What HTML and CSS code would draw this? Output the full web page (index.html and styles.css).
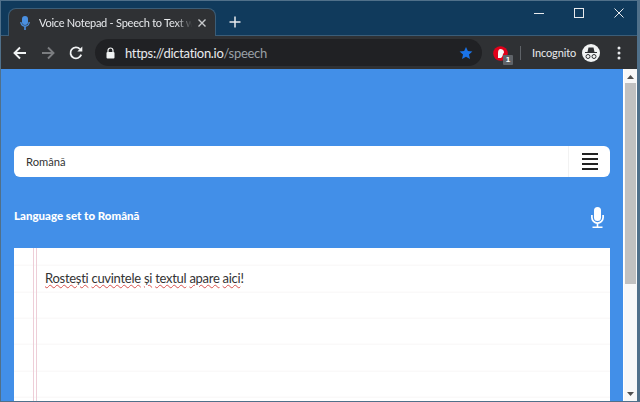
FILE: index.html
```html
<!DOCTYPE html>
<html lang="ro">
<head>
<meta charset="utf-8">
<title>Voice Notepad</title>
<link rel="stylesheet" href="styles.css">
</head>
<body>
<div class="window">
  <header class="tabstrip">
    <div class="tab">
      <svg class="tab-icon" width="10" height="14" viewBox="0 0 10 14"><rect x="2" y="0" width="6" height="9" rx="3" fill="#4a90e2"/><path d="M.8 6a4.200 4.200 0 0 0 8.400 0" fill="none" stroke="#4a90e2" stroke-width="1.300"/><rect x="4.200" y="10" width="1.600" height="4" fill="#4a90e2"/></svg>
      <span class="tab-title">Voice Notepad - Speech to Text w</span>
      <svg class="tab-close" width="10" height="10" viewBox="0 0 10 10"><path d="M1.500 1.500l7 7M8.500 1.500l-7 7" stroke="#c8cacc" stroke-width="1.400"/></svg>
    </div>
    <svg class="new-tab" width="12" height="12" viewBox="0 0 12 12"><path d="M6 .5v11M.5 6h11" stroke="#e8eaed" stroke-width="1.500"/></svg>
    <div class="win-controls">
      <svg width="10" height="10" viewBox="0 0 10 10"><path d="M0 5.500h10" stroke="#e8eaed"/></svg>
      <svg width="10" height="10" viewBox="0 0 10 10"><rect x=".5" y=".5" width="9" height="9" fill="none" stroke="#e8eaed"/></svg>
      <svg width="10" height="10" viewBox="0 0 10 10"><path d="M.5.5l9 9M9.500.5l-9 9" stroke="#e8eaed"/></svg>
    </div>
  </header>
  <nav class="toolbar">
    <svg class="nav-icon" width="16" height="16" viewBox="0 0 16 16"><path d="M14 8H3M8 2.500L2.500 8 8 13.500" fill="none" stroke="#f1f3f4" stroke-width="1.900"/></svg>
    <svg class="nav-icon" width="16" height="16" viewBox="0 0 16 16"><path d="M2 8h11M8 2.500L13.500 8 8 13.500" fill="none" stroke="#7b7d80" stroke-width="1.900"/></svg>
    <svg class="nav-icon" width="16" height="16" viewBox="0 0 16 16"><path d="M13.200 9.600A5.500 5.500 0 1 1 12 4.100" fill="none" stroke="#f1f3f4" stroke-width="1.800"/><path d="M9.300 6.600h5V1.600z" fill="#f1f3f4"/></svg>
    <div class="omnibox">
      <svg class="lock" width="9" height="12" viewBox="0 0 9 12"><path d="M2 5V3.500a2.500 2.500 0 0 1 5 0V5" fill="none" stroke="#f1f3f4" stroke-width="1.200"/><rect x=".5" y="5" width="8" height="6.500" rx="1" fill="#f1f3f4"/></svg>
      <span class="url"><span class="url-host">https://dictation.io</span><span class="url-path">/speech</span></span>
      <svg class="star" width="14" height="14" viewBox="0 0 24 24"><path d="M12 1.500l3.200 7.200 7.800.8-5.900 5.200 1.700 7.700L12 18.400 5.200 22.400l1.700-7.700L1 9.500l7.800-.8z" fill="#1a73e8"/></svg>
    </div>
    <div class="ext">
      <svg class="ext-icon" width="15" height="15" viewBox="0 0 15 15"><circle cx="7.500" cy="7.500" r="7.300" fill="#e2001a"/><path d="M5 12V7c0-2.500 1-4 2.500-4S11 4 11 6c0 1-.5 1.500-1 2-.3 2.500-1.500 4-2.500 4z" fill="#f6f6f6"/></svg>
      <span class="ext-badge">1</span>
    </div>
    <span class="divider"></span>
    <span class="incognito-label">Incognito</span>
    <svg class="incognito-icon" width="18" height="18" viewBox="0 0 18 18"><circle cx="9" cy="9" r="9" fill="#f1f3f4"/><path d="M3 8h12v1H3zM5.500 8l1-4.500h5l1 4.500z" fill="#2f3134"/><circle cx="6" cy="12.500" r="2" fill="none" stroke="#2f3134" stroke-width="1"/><circle cx="12" cy="12.500" r="2" fill="none" stroke="#2f3134" stroke-width="1"/></svg>
    <svg class="kebab" width="4" height="14" viewBox="0 0 4 14"><circle cx="2" cy="2" r="1.500" fill="#e8eaed"/><circle cx="2" cy="7" r="1.500" fill="#e8eaed"/><circle cx="2" cy="12" r="1.500" fill="#e8eaed"/></svg>
  </nav>
  <div class="viewport">
    <main class="page">
      <div class="langbar">
        <span class="lang-name">Română</span>
        <button class="menu-btn" type="button" aria-label="Menu"><span></span><span></span><span></span><span></span></button>
      </div>
      <div class="status">
        <strong class="status-text">Language set to Română</strong>
        <svg class="mic" width="13" height="21" viewBox="0 0 13 21"><rect x="3" y="0" width="7" height="14" rx="3.500" fill="#fff"/><path d="M.9 8v2.500a5.600 5.600 0 0 0 11.200 0V8" fill="none" stroke="#fff" stroke-width="1.700"/><rect x="5.700" y="16" width="1.600" height="4" fill="#fff"/><rect x="1.500" y="19.500" width="10" height="1.500" fill="#fff"/></svg>
      </div>
      <section class="paper">
        <p class="paper-text"><span class="sp">Rostești</span> <span class="sp">cuvintele</span> <span class="sp">și</span> <span class="sp">textul</span> <span class="sp">apare</span> <span class="sp">aici</span>!</p>
      </section>
    </main>
    <aside class="scrollbar">
      <svg width="7" height="4" viewBox="0 0 7 4"><path d="M3.500 0L7 4H0z" fill="#505050"/></svg>
      <div class="thumb"></div>
      <svg class="arrow-down" width="7" height="4" viewBox="0 0 7 4"><path d="M0 0h7L3.500 4z" fill="#505050"/></svg>
    </aside>
  </div>
</div>
</body>
</html>
```
FILE: styles.css
```css
* { box-sizing: border-box; }
html, body { margin: 0; padding: 0; }
body { width: 640px; height: 402px; overflow: hidden; font-family: "Lato", sans-serif; }
.window { width: 640px; height: 402px; display: flex; flex-direction: column; border: solid #50708a; border-width: 1px 3px 1px 1px; background: #103a5c; }

.tabstrip { height: 35px; display: flex; align-items: flex-end; background: #103a5c; padding-left: 7px; flex: none; border-bottom: 1px solid #3b5d78; }
.tab { width: 208px; height: 28px; margin-bottom: -1px; background: #2f3134; border: 1px solid #3b5d78; border-bottom: 0; border-radius: 8px 8px 0 0; display: flex; align-items: center; padding: 0 8px 0 11px; color: #e8eaed; font-size: 11px; letter-spacing: -.24px; position: relative; }
.tab-icon { flex: none; margin-right: 9px; }
.tab-title { flex: 1; white-space: nowrap; overflow: hidden; -webkit-mask-image: linear-gradient(to right, #000 88%, transparent 99%); mask-image: linear-gradient(to right, #000 88%, transparent 99%); }
.tab-close { flex: none; margin-left: 3px; }
.new-tab { margin: 0 0 7px 13px; }
.win-controls { margin-left: auto; align-self: flex-start; display: flex; gap: 30px; padding: 7px 13px 0 0; }

.toolbar { height: 33px; flex: none; display: flex; align-items: center; background: #2f3134; padding-left: 11px; }
.nav-icon { flex: none; margin-right: 12px; }
.omnibox { width: 387px; height: 27px; border-radius: 14px; background: #202124; display: flex; align-items: center; padding: 0 9px 0 11px; margin-left: -1px; flex: none; }
.lock { flex: none; margin-right: 10px; }
.url { flex: 1; font-size: 13px; letter-spacing: -.3px; white-space: nowrap; }
.url-host { color: #e8eaed; }
.url-path { color: #9aa0a6; }
.ext { position: relative; width: 20px; height: 24px; padding-top: 5px; margin-left: 11px; flex: none; }
.ext-icon { display: block; }
.ext-badge { position: absolute; left: 10px; top: 14px; width: 10px; height: 10px; background: #5f6368; color: #fff; font: bold 8px/10px "Liberation Sans", sans-serif; text-align: center; border-radius: 1px; }
.divider { width: 1px; height: 14px; background: #5f6368; margin: 0 11px 0 7px; flex: none; }
.incognito-label { color: #e8eaed; font-size: 11px; letter-spacing: -.1px; width: 44px; white-space: nowrap; flex: none; }
.incognito-icon { flex: none; margin-left: 6px; }
.kebab { flex: none; margin-left: 17px; }

.viewport { flex: 1; min-height: 0; display: flex; background: #fff; }
.page { width: 622px; flex: none; background: #428fe8; padding: 77px 13px 0; overflow: hidden; }
.langbar { height: 31px; background: #fff; border-radius: 6px; display: flex; align-items: center; justify-content: space-between; padding-left: 12px; }
.lang-name { font-size: 11.2px; color: #333; }
.menu-btn { width: 42px; height: 31px; border: 0; border-left: 1px solid #f2f2f2; background: none; display: flex; flex-direction: column; justify-content: center; align-items: center; gap: 3px; padding: 0; }
.menu-btn span { display: block; width: 16px; height: 2px; background: #222; }
.status { height: 71px; display: flex; align-items: center; justify-content: space-between; padding: 6px 6px 0 0; }
.status-text { font-weight: 900; font-size: 11.5px; color: #fff; }
.mic { margin-top: 4px; }
.paper { height: 200px; background-color: #fff; background-image:
  linear-gradient(to right, transparent 19px, #eeced8 19px, #eeced8 20px, transparent 20px, transparent 22px, #eeced8 22px, #eeced8 23px, transparent 23px),
  repeating-linear-gradient(to bottom, transparent 0, transparent 25.33px, #f8f6f6 25.33px, #f8f6f6 26.33px);
  background-position: 0 0, 0 -8.33px; padding: 22px 0 0 31px; }
.paper-text { margin: 0; font-size: 13px; letter-spacing: -.28px; line-height: 16px; color: #333; }
.sp { text-decoration: underline wavy #d9534f 1px; text-underline-offset: 1px; }

.scrollbar { width: 14px; flex: none; display: flex; flex-direction: column; align-items: center; background: #f8f8f8; padding-top: 6px; border-left: 1px solid #fff; }
.thumb { width: 11px; height: 201px; background: #c1c1c1; margin-top: 4px; }
.arrow-down { margin-top: auto; margin-bottom: 5px; }
```
